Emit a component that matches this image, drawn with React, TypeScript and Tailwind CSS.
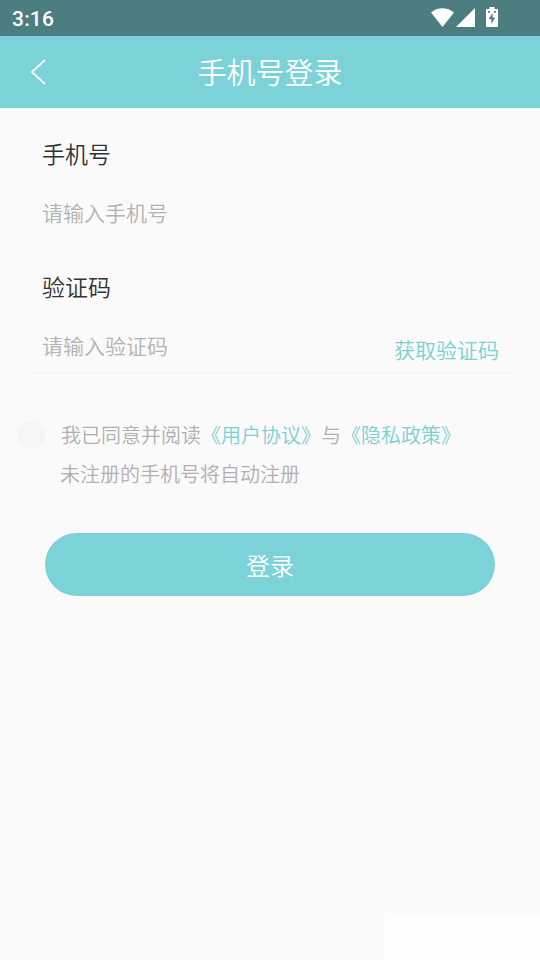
import type { ReactNode } from 'react';

const StatusBar = () => (
  <div className="flex h-9 items-center justify-between bg-[#4c7d81] pl-3 pr-[42px] text-white">
    <span className="font-['Roboto','Noto_Sans_CJK_SC',sans-serif] pt-0.5 text-[21px] font-medium leading-9 tracking-[0.2px]">3:16</span>
    <svg className="-mt-0.5" width="68" height="20" viewBox="0 0 68 20" fill="currentColor">
      <path d="M1 5.6C7.5-.1 17.5-.1 24 5.6L12.5 20z" />
      <path d="M45 1v19H26z" />
      <path
        fillRule="evenodd"
        d="M59.5 0h5v2h2.7c.5 0 .8.3.8.8v16.4c0 .5-.3.8-.8.8H56.8c-.5 0-.8-.3-.8-.8V2.8c0-.5.3-.8.8-.8h2.7zM58 4v1.8h2V4zM64 4v1.8h2V4zM62.6 5.8L58.8 12h2.6v5l3.8-6.4h-2.6z"
      />
    </svg>
  </div>
);

const Field = ({ label, placeholder, children }: { label: string; placeholder: string; children?: ReactNode }) => (
  <div className="ml-8 mr-7 h-[133px] border-b-2 border-[#f6f6f6] pl-2.5 pr-[13px]">
    <p className="pt-7 text-[23px] leading-[34px] text-[#333333]">{label}</p>
    <div className="mt-[26px] flex h-8 items-start justify-between text-[21px] leading-8">
      <span className="text-[#b2b2b2]">{placeholder}</span>
      {children}
    </div>
  </div>
);

const App = () => {
  return (
    <div lang="zh-CN" className="relative h-[960px] w-[540px] overflow-hidden bg-[#fafafa] font-['Noto_Sans_CJK_SC',sans-serif] font-[350]">
      <StatusBar />
      <header className="grid h-[72px] grid-cols-[78px_1fr_78px] items-center bg-[#7bd2d8] text-white">
        <svg className="ml-[30px]" width="18" height="28" viewBox="0 0 18 28" fill="none" stroke="currentColor" strokeOpacity="0.9" strokeWidth="2">
          <path d="M15 2L2 14l13 12" />
        </svg>
        <h1 className="-mt-0.5 text-center text-[29px] font-[350] leading-[42px]">手机号登录</h1>
      </header>

      <main>
        <Field label="手机号" placeholder="请输入手机号" />
        <Field label="验证码" placeholder="请输入验证码">
          <button className="mt-1 leading-8 text-[#7bcfd5]">获取验证码</button>
        </Field>

        <div className="mt-[46px] flex pl-[17px] text-xl leading-[30px] text-[#b0b0b0]">
          <span className="mt-[1px] h-7 w-7 rounded-full bg-[#f5f5f5]"></span>
          <div className="ml-[15px]">
            <p className="pl-px">
              我已同意并阅读<span className="text-[#7bcfd5]">《用户协议》</span>与<span className="text-[#7bcfd5]">《隐私政策》</span>
            </p>
            <p className="mt-[9px]">未注册的手机号将自动注册</p>
          </div>
        </div>

        <button className="mx-[45px] mt-11 flex h-[63px] w-[450px] items-center justify-center rounded-full bg-[#7bd2d8] text-2xl text-white">
          登录
        </button>
      </main>

      <div className="absolute -bottom-3 -right-3 h-14 w-[168px] bg-[#fefefe] blur-[5px]"></div>
    </div>
  );
};

export default App;
